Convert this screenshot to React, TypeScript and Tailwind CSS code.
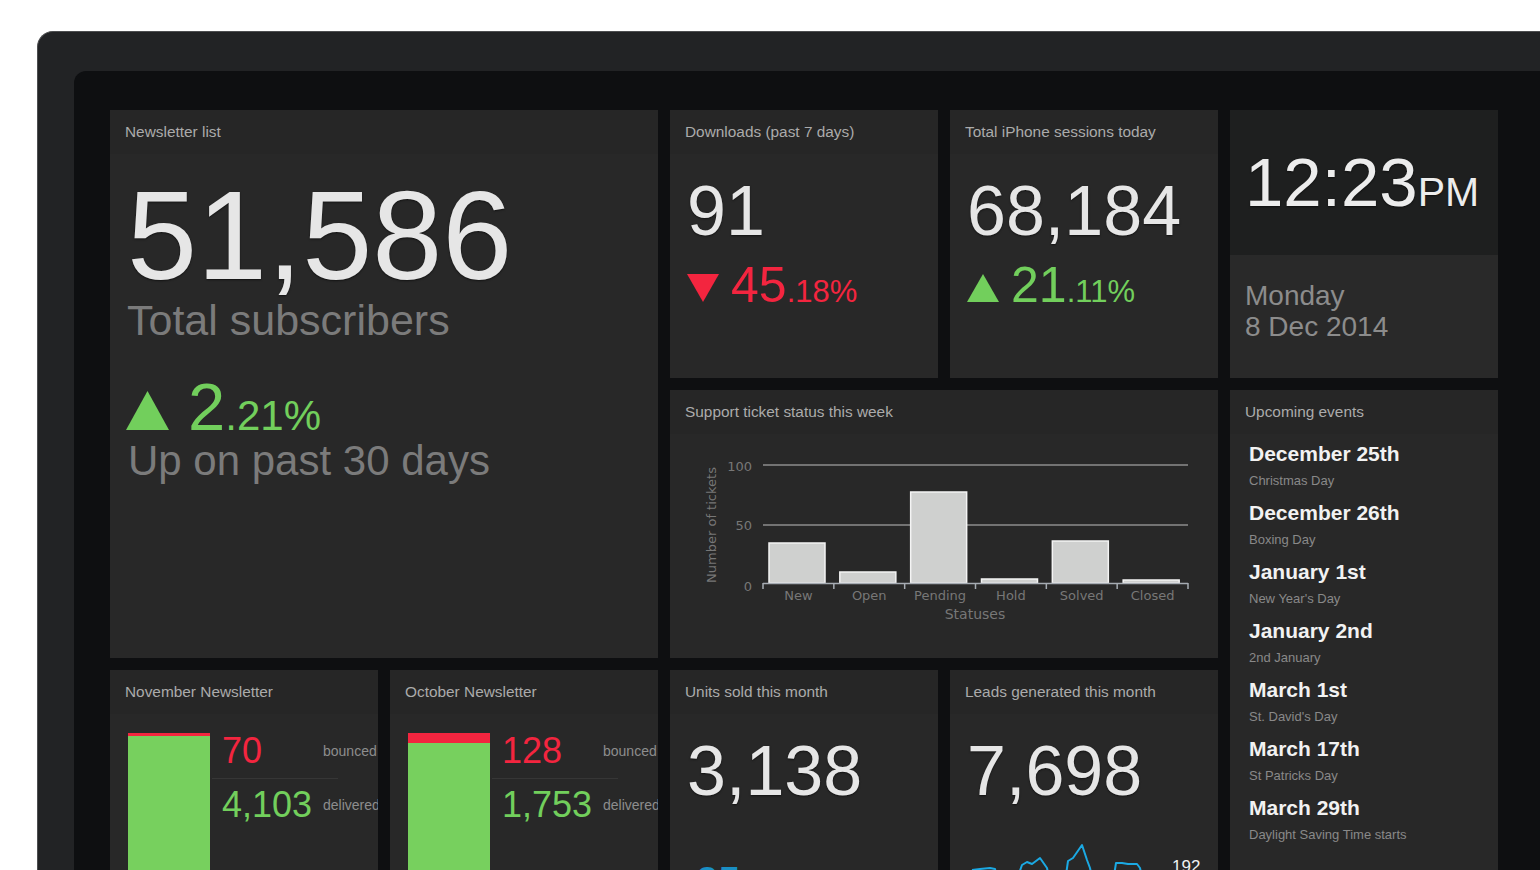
import clsx from "clsx";
import type { ReactNode } from "react";

const shadow = "[text-shadow:0_1px_2px_rgba(0,0,0,0.55)]";

const Tile = ({
  title,
  className,
  children,
}: {
  title?: string;
  className?: string;
  children: ReactNode;
}) => (
  <div className={clsx("flex flex-col overflow-hidden bg-[#282828]", className)}>
    {title && (
      <div className="flex h-[44px] shrink-0 items-center bg-[#262626] px-[15px] text-[15.4px] text-[#ababab]">
        {title}
      </div>
    )}
    <div className="flex flex-1 flex-col">{children}</div>
  </div>
);

const Triangle = ({ up, w, h, color }: { up: boolean; w: number; h: number; color: string }) => (
  <svg width={w} height={h} viewBox={`0 0 ${w} ${h}`} className="shrink-0">
    <polygon points={up ? `0,${h} ${w / 2},0 ${w},${h}` : `0,0 ${w},0 ${w / 2},${h}`} fill={color} />
  </svg>
);

const Delta = ({ up, whole, frac }: { up: boolean; whole: string; frac: string }) => {
  const color = up ? "#72cf5c" : "#f3253f";
  return (
    <div className={clsx("mt-[14px] flex items-baseline px-[17px]", up ? "text-[#72cf5c]" : "text-[#f3253f]")}>
      <Triangle up={up} w={32} h={28} color={color} />
      <span className="ml-[12px] text-[50px] leading-none">{whole}</span>
      <span className="text-[31px] leading-none">.{frac}%</span>
    </div>
  );
};

const BigNumber = ({ children }: { children: ReactNode }) => (
  <div className={clsx("mt-[22px] pl-[17px] text-[70px] leading-none text-[#e6e6e6]", shadow)}>{children}</div>
);

const tickets = [
  { label: "New", top: 153 },
  { label: "Open", top: 182 },
  { label: "Pending", top: 102 },
  { label: "Hold", top: 189 },
  { label: "Solved", top: 151 },
  { label: "Closed", top: 190 },
];

const TicketChart = () => {
  const step = 425 / 6;
  return (
    <svg width={548} height={224} viewBox="0 44 548 224" className="font-['DejaVu_Sans',sans-serif]">
      <line x1={93} x2={518} y1={75} y2={75} stroke="#8c8c8c" strokeWidth={1.5} />
      <line x1={93} x2={518} y1={135} y2={135} stroke="#8c8c8c" strokeWidth={1.5} />
      {tickets.map((t, i) => (
        <rect
          key={t.label}
          x={99 + i * step}
          y={t.top}
          width={56}
          height={193 - t.top}
          fill="#cfd0cf"
          stroke="#f4f4f4"
          strokeWidth={1.5}
        />
      ))}
      <line x1={93} x2={518} y1={193.5} y2={193.5} stroke="#a6acb3" strokeWidth={1.5} />
      {Array.from({ length: 7 }).map((_, i) => (
        <line key={i} x1={93 + i * step} x2={93 + i * step} y1={193} y2={199} stroke="#a6acb3" strokeWidth={1.5} />
      ))}
      <g fill="#777777" fontSize={13}>
        <text x={82} y={77} textAnchor="end" dominantBaseline="middle">100</text>
        <text x={82} y={136} textAnchor="end" dominantBaseline="middle">50</text>
        <text x={82} y={197} textAnchor="end" dominantBaseline="middle">0</text>
        {tickets.map((t, i) => (
          <text key={t.label} x={93 + step * (i + 0.5)} y={206} textAnchor="middle" dominantBaseline="middle">
            {t.label}
          </text>
        ))}
        <text x={305} y={225} textAnchor="middle" dominantBaseline="middle" fontSize={14}>
          Statuses
        </text>
        <text x={42} y={135} textAnchor="middle" dominantBaseline="middle" transform="rotate(-90 42 135)">
          Number of tickets
        </text>
      </g>
    </svg>
  );
};

const events = [
  ["December 25th", "Christmas Day"],
  ["December 26th", "Boxing Day"],
  ["January 1st", "New Year's Day"],
  ["January 2nd", "2nd January"],
  ["March 1st", "St. David's Day"],
  ["March 17th", "St Patricks Day"],
  ["March 29th", "Daylight Saving Time starts"],
];

const NewsletterStats = ({ bounced, delivered, redHeight }: { bounced: string; delivered: string; redHeight: string }) => (
  <div className="flex flex-1 pl-[18px] pt-[19px]">
    <div className="flex w-[82px] shrink-0 flex-col">
      <div className={clsx("bg-[#f3253f]", redHeight)} />
      <div className="flex-1 bg-[#77d05e]" />
    </div>
    <div className="ml-[2px] flex flex-col whitespace-nowrap">
      <div className="flex items-center pl-[10px]">
        <span className="w-[101px] text-[36px] leading-none text-[#f3253f]">{bounced}</span>
        <span className="text-[14px] text-[#8d8d8d]">bounced</span>
      </div>
      <div className="mt-[9px] h-px w-[126px] bg-[#363636]" />
      <div className="mt-[8px] flex items-center pl-[10px]">
        <span className="w-[101px] text-[36px] leading-none text-[#72cf5c]">{delivered}</span>
        <span className="text-[14px] text-[#8d8d8d]">delivered</span>
      </div>
    </div>
  </div>
);

const Sparkline = () => (
  <svg width={268} height={108} viewBox="0 0 268 108" className="mt-[24px]">
    <polyline
      points="22,40 30,39 40,38 45,39 48,52 66,52 72,35 77,32 82,34 90,28 97,38 100,52 115,52 118,31 123,28 132,15 137,30 140,38 143,52 163,52 166,33 172,33 178,34 187,34 190,38 193,52"
      fill="none"
      stroke="#1ba9e3"
      strokeWidth={2}
      strokeLinejoin="round"
    />
    <text x={222} y={42} fill="#f0f0f0" fontSize={17}>
      192
    </text>
  </svg>
);

export default function App() {
  return (
    <div className="h-[870px] w-[1540px] overflow-hidden bg-white pl-[37px] pt-[31px] font-['Liberation_Sans',Arial,sans-serif]">
      <div className="h-[1000px] w-[1600px] rounded-tl-[16px] border-l border-t border-[#4d4e50] bg-[#222325] pl-[36px] pt-[39px]">
        <div className="h-full w-full rounded-tl-[12px] bg-[#0e0f11] pl-[36px] pt-[39px]">
          <div className="grid grid-cols-[repeat(5,268px)] grid-rows-[repeat(3,268px)] gap-[12px]">
            <Tile title="Newsletter list" className="col-span-2 row-span-2">
              <div className={clsx("mt-[19px] pl-[17px] text-[126px] leading-none text-[#e6e6e6]", shadow)}>
                51,586
              </div>
              <div className="mt-0 pl-[17px] text-[43px] leading-none text-[#7b7b7b]">Total subscribers</div>
              <div className="mt-[31px] flex items-baseline pl-[16px] text-[#72cf5c]">
                <Triangle up w={43} h={39} color="#72cf5c" />
                <span className="ml-[19px] text-[67px] leading-none">2</span>
                <span className="text-[42px] leading-none">.21%</span>
              </div>
              <div className="pl-[18px] text-[42px] leading-none text-[#7b7b7b]">Up on past 30 days</div>
            </Tile>

            <Tile title="Downloads (past 7 days)">
              <BigNumber>91</BigNumber>
              <Delta up={false} whole="45" frac="18" />
            </Tile>

            <Tile title="Total iPhone sessions today">
              <BigNumber>68,184</BigNumber>
              <Delta up whole="21" frac="11" />
            </Tile>

            <div className="flex flex-col overflow-hidden">
              <div className={clsx("flex h-[145px] items-center bg-[#1e1f1f] pl-[15px] text-[#ececec]", shadow)}>
                <div className="flex items-baseline">
                  <span className="text-[69px] leading-none">12:23</span>
                  <span className="text-[41px] leading-none">PM</span>
                </div>
              </div>
              <div className="flex-1 bg-[#292929] pl-[15px] pt-[25px] text-[28px] leading-[31px] text-[#8c8c8c]">
                <div>Monday</div>
                <div>8 Dec 2014</div>
              </div>
            </div>

            <Tile title="Support ticket status this week" className="col-span-2">
              <TicketChart />
            </Tile>

            <Tile title="Upcoming events" className="row-span-2">
              <div className="flex flex-col gap-[10px] px-[19px] pt-[7px]">
                {events.map(([day, name]) => (
                  <div key={day}>
                    <div className="text-[21px] font-bold leading-[26px] text-[#f2f2f2]">{day}</div>
                    <div className="mt-[5px] text-[13px] leading-[18px] text-[#898989]">{name}</div>
                  </div>
                ))}
              </div>
            </Tile>

            <Tile title="November Newsletter">
              <NewsletterStats bounced="70" delivered="4,103" redHeight="h-[3px]" />
            </Tile>

            <Tile title="October Newsletter">
              <NewsletterStats bounced="128" delivered="1,753" redHeight="h-[10px]" />
            </Tile>

            <Tile title="Units sold this month">
              <BigNumber>3,138</BigNumber>
              <div className="mt-[55px] pl-[26px] text-[40px] leading-none text-[#1a8fc4]">25</div>
            </Tile>

            <Tile title="Leads generated this month">
              <BigNumber>7,698</BigNumber>
              <Sparkline />
            </Tile>
          </div>
        </div>
      </div>
    </div>
  );
}
